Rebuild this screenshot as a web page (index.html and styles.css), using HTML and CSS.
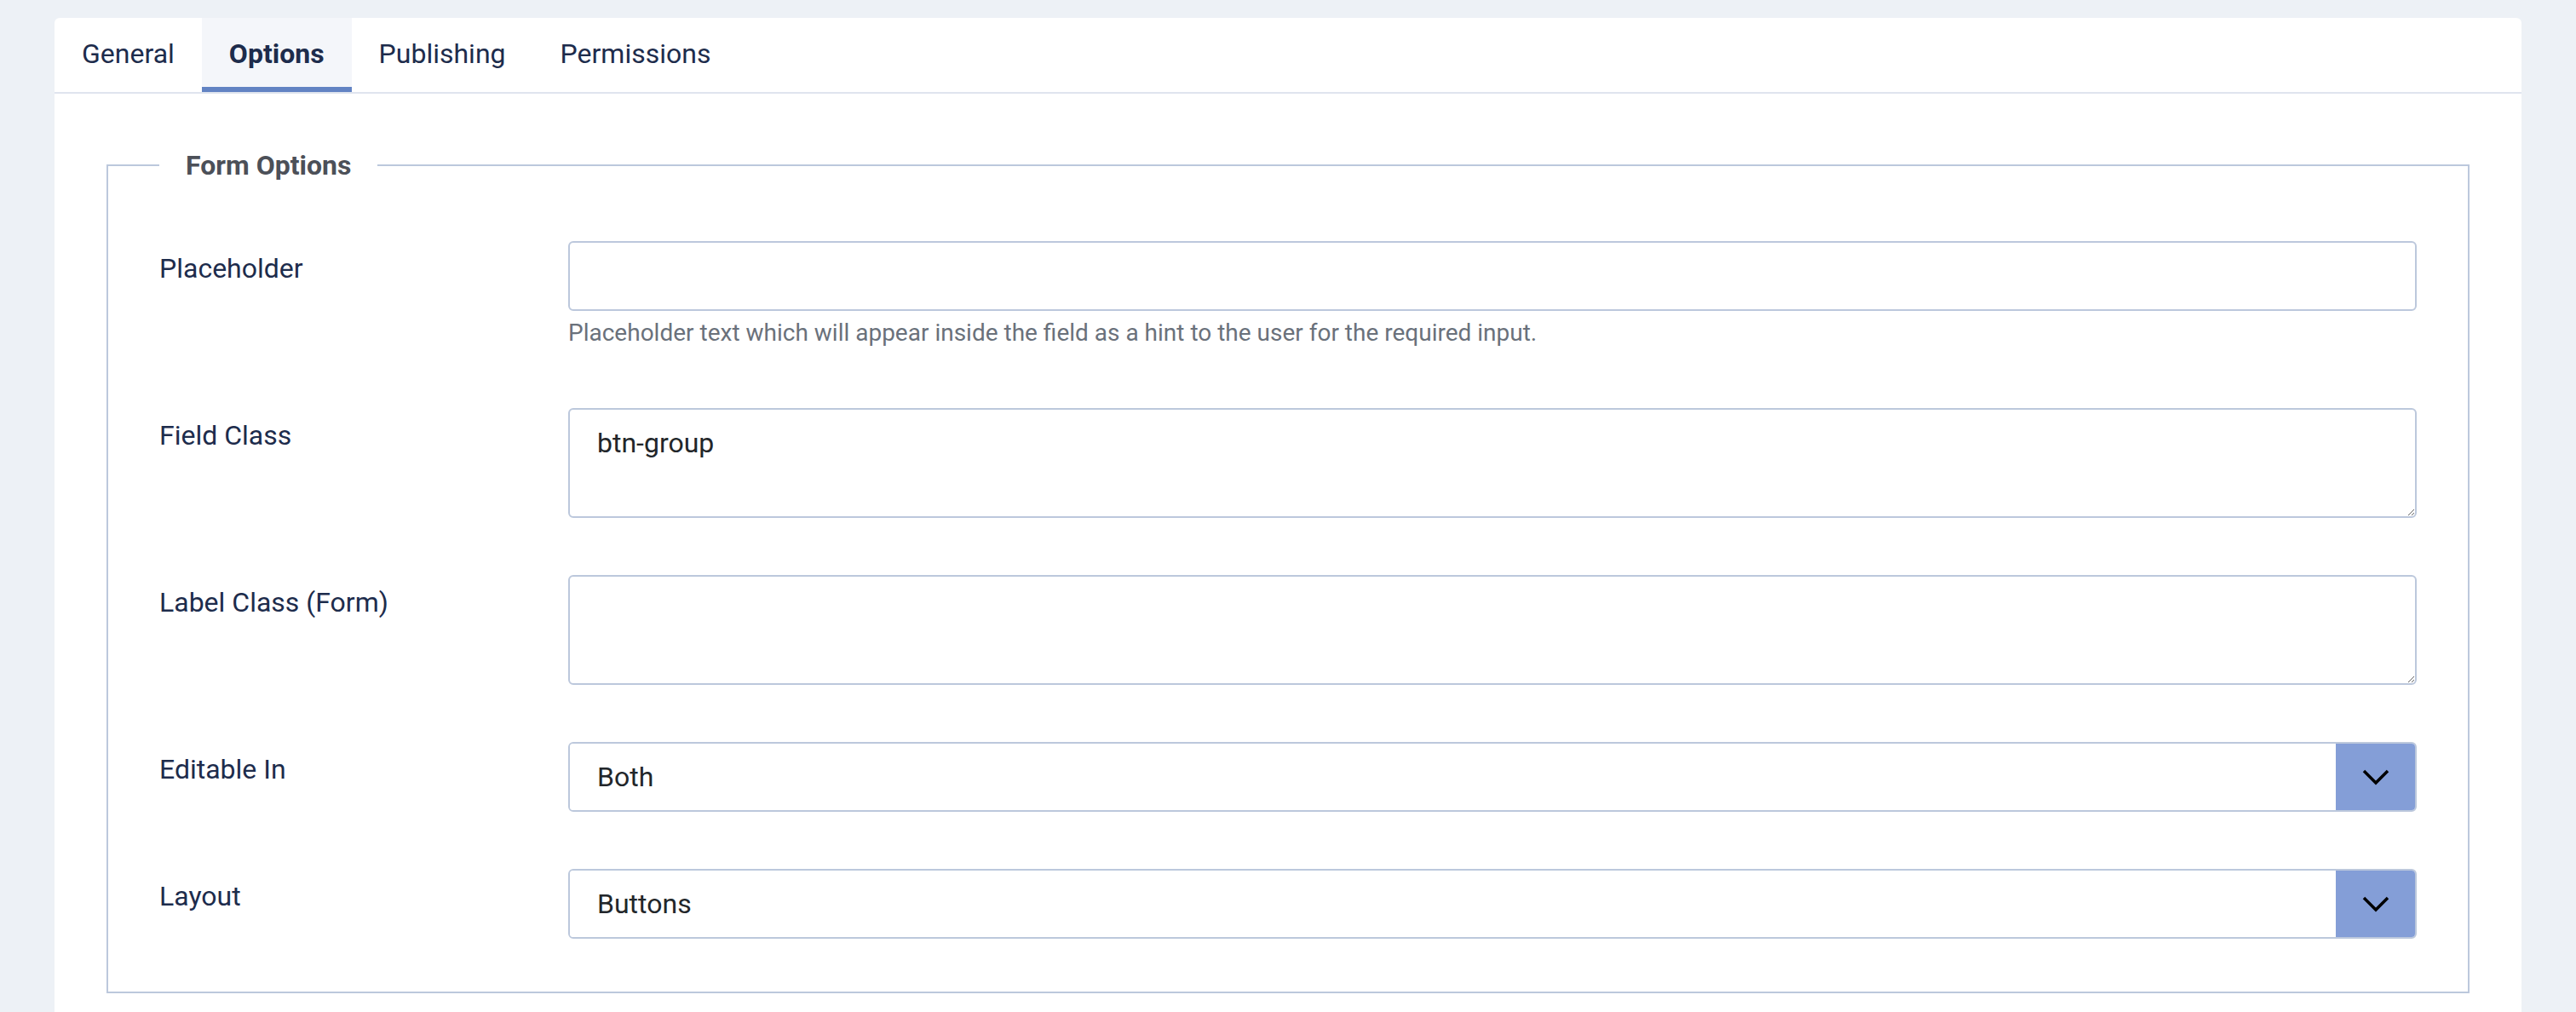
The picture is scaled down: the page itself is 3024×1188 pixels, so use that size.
FILE: index.html
```html
<!DOCTYPE html>
<html lang="en">
  <head>
    <meta charset="UTF-8" />
    <meta name="viewport" content="width=device-width, initial-scale=1.0" />
    <title>Field Options</title>
    <link rel="stylesheet" href="styles.css">
  </head>
  <body>
    <div class="card">
      <div class="tabs">
        <button type="button" class="tab">General</button>
        <button type="button" class="tab active">Options</button>
        <button type="button" class="tab">Publishing</button>
        <button type="button" class="tab">Permissions</button>
      </div>

      <div class="card-body">
        <fieldset class="options-form">
          <legend>Form Options</legend>

          <div class="control-group">
            <label class="control-label" for="placeholder">Placeholder</label>
            <div class="controls">
              <input type="text" id="placeholder" class="form-control" />
              <small class="form-text">Placeholder text which will appear inside the field as a hint to the user for the required input.</small>
            </div>
          </div>

          <div class="control-group">
            <label class="control-label" for="fieldClass">Field Class</label>
            <div class="controls">
              <textarea id="fieldClass" class="form-control">btn-group</textarea>
            </div>
          </div>

          <div class="control-group">
            <label class="control-label" for="labelClass">Label Class (Form)</label>
            <div class="controls">
              <textarea id="labelClass" class="form-control"></textarea>
            </div>
          </div>

          <div class="control-group">
            <label class="control-label" for="editableIn">Editable In</label>
            <div class="controls">
              <div class="select-wrap">
                <select id="editableIn" class="form-select">
                  <option>Both</option>
                  <option>Site</option>
                  <option>Administrator</option>
                </select>
                <span class="select-btn">
                  <svg width="32" height="20" viewBox="0 0 32 20"><path d="M2 3 L16 17 L30 3" fill="none" stroke="#000" stroke-width="3.5"/></svg>
                </span>
              </div>
            </div>
          </div>

          <div class="control-group">
            <label class="control-label" for="layout">Layout</label>
            <div class="controls">
              <div class="select-wrap">
                <select id="layout" class="form-select">
                  <option>Buttons</option>
                  <option>Radio</option>
                </select>
                <span class="select-btn">
                  <svg width="32" height="20" viewBox="0 0 32 20"><path d="M2 3 L16 17 L30 3" fill="none" stroke="#000" stroke-width="3.5"/></svg>
                </span>
              </div>
            </div>
          </div>
        </fieldset>
      </div>
    </div>
  </body>
</html>
```

FILE: styles.css
```css
body {
  margin: 0;
  background-color: #edf1f6;
  font-family: Roboto, "Liberation Sans", sans-serif;
  font-size: 32px;
  line-height: 48px;
  color: #22262a;
}

.card {
  margin: 21px 64px 0 64px;
  background: #fff;
  border-radius: 6px 6px 0 0;
}

.tabs {
  display: flex;
  border-bottom: 2px solid #dfe4ee;
}

.tab {
  padding: 18px 32px 15px;
  border: 0;
  border-bottom: 6px solid transparent;
  background: transparent;
  font-family: inherit;
  font-size: 32px;
  line-height: 48px;
  color: #1d2c4c;
  cursor: pointer;
}

.tab.active {
  font-weight: 700;
  background: #f4f6fa;
  border-bottom-color: #6283c3;
}

.card-body {
  padding: 60px 61px 60px;
}

.options-form {
  margin: 0;
  padding: 65px 60px 62px 60px;
  border: 2px solid #bcc8dc;
}

.options-form legend {
  padding: 0 31px;
  font-size: 32px;
  line-height: 48px;
  font-weight: 700;
  color: #4c5058;
}

.control-group {
  display: flex;
  margin-bottom: 67px;
}

.control-group:last-child {
  margin-bottom: 0;
}

.control-label {
  width: 480px;
  flex-shrink: 0;
  padding-top: 8px;
  color: #1d2c4c;
}

.controls {
  flex: 1;
  min-width: 0;
}

.form-control {
  display: block;
  box-sizing: border-box;
  width: 100%;
  height: 82px;
  margin: 0;
  padding: 15px 32px;
  border: 2px solid #bcc8dc;
  border-radius: 6px;
  font-family: inherit;
  font-size: 32px;
  line-height: 48px;
  color: #22262a;
  background: #fff;
  outline: none;
}

textarea.form-control {
  height: 129px;
  resize: vertical;
}

.form-text {
  display: block;
  margin-top: 5px;
  font-size: 28px;
  line-height: 42px;
  color: #6a717b;
}

.select-wrap {
  display: flex;
  height: 82px;
  box-sizing: border-box;
  border: 2px solid #bcc8dc;
  border-radius: 6px;
  overflow: hidden;
}

.form-select {
  flex: 1;
  min-width: 0;
  appearance: none;
  border: 0;
  padding: 15px 32px;
  font-family: inherit;
  font-size: 32px;
  line-height: 48px;
  color: #22262a;
  background: #fff;
  outline: none;
}

.select-btn {
  width: 93px;
  display: flex;
  align-items: center;
  justify-content: center;
  background: #849ed7;
}
```
